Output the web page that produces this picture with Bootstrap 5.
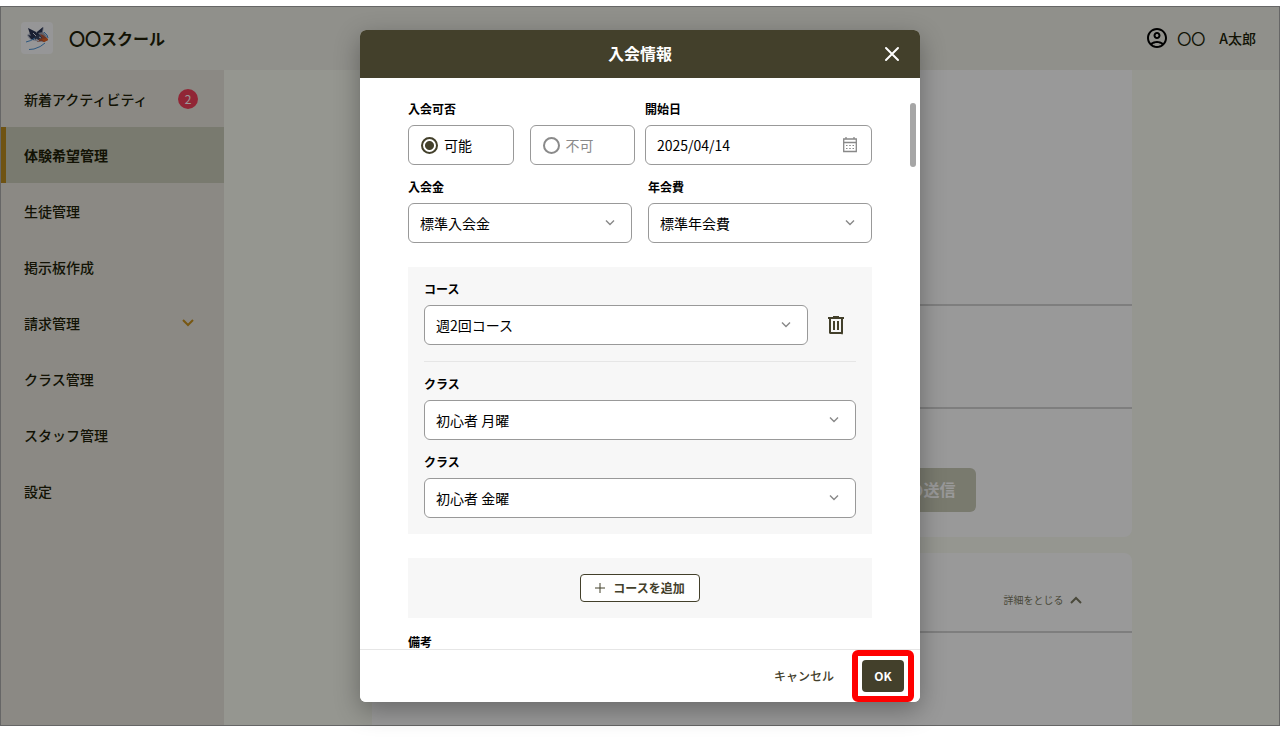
<!DOCTYPE html>
<html lang="ja">
<head>
<meta charset="utf-8">
<meta name="viewport" content="width=device-width, initial-scale=1">
<title>入会情報</title>
<link href="https://cdn.jsdelivr.net/npm/bootstrap@5.3.0/dist/css/bootstrap.min.css" rel="stylesheet">
<style>
  :root { --olive: #43402b; --ink: #201f08; --line: #999; }
  body { font-family: "Noto Sans CJK JP", sans-serif; font-size: 14px; line-height: 20px; color: #000; background: #fff; }
  .app-frame { height: calc(100vh - 32px); margin: 6px 0 26px; border: 1px solid #666; }
  .app-page { background: #f8faf0; color: var(--ink); }
  .app-header { height: 63px; padding: 0 23px 2px 20px; background: #f0f1e8; }
  .brand-name { font-size: 16px; font-weight: 700; color: var(--ink); }
  .side-menu { width: 223px; background: #e8e5dc; padding-top: 1px; }
  .side-menu .nav-link { height: 56px; padding: 0 26px 1px 23px; color: var(--ink); font-weight: 500; }
  .side-menu .nav-link.active { background: #cacbba; border-left: 5px solid #b98a1e; padding-left: 18px; font-weight: 700; }
  .count-badge { width: 20px; height: 20px; background: #f2405a; font-size: 12px; line-height: 20px; font-weight: 400; }
  .content-col { max-width: 760px; }
  .panel-block { background: #fff; }
  .panel-row { border-bottom: 2px solid #d2d2d2; }
  .btn-send { height: 44px; padding: 0 20px 2px; border: 0; border-radius: 6px; background: #cacbb8; color: #fff; font-size: 16px; font-weight: 700; margin: 59px 156px 25px 0; }
  .toggle-link { font-size: 10px; color: #7c7b63; }
  .overlay { inset: 0; background: rgba(0,0,0,.4); padding: 23px 16px; }
  .entry-modal { width: 100%; max-width: 560px; background: #fff; border-radius: 6px; box-shadow: 0 8px 26px rgba(0,0,0,.32); }
  .entry-head { height: 48px; background: #43402b; color: #fff; border-radius: 6px 6px 0 0; }
  .entry-head h1 { font-size: 16px; line-height: 24px; font-weight: 700; padding-bottom: 2px; }
  .close-btn { right: 16px; }
  .entry-body { padding: 23px 48px 0; }
  .field-label { display: block; font-size: 12px; line-height: 16px; font-weight: 700; margin-bottom: 8px; padding: 0; }
  .field-box, .form-select { height: 40px; border: 1px solid var(--line); border-radius: 6px; background-color: #fff; padding: 0 12px 0 11px; font-size: 14px; line-height: 20px; color: #000; }
  .form-select { background-image: url("data:image/svg+xml,%3Csvg xmlns='http://www.w3.org/2000/svg' viewBox='0 0 12 12'%3E%3Cpath d='M2 3.5l4 4 4-4' fill='none' stroke='%23888' stroke-width='1.4'/%3E%3C/svg%3E"); background-size: 12px; background-position: right 15px center; }
  .field-box input[type=text] { min-width: 0; border: 0; padding: 0; outline: 0; background: transparent; }
  .stack { display: flex; flex-direction: column; gap: 14px; }
  .group-box { background: #f7f7f7; padding: 14px 16px 16px; margin-top: 24px; }
  .group-box hr { margin: 2px 0 0; border-color: #e6e6e6; opacity: 1; }
  .choice { gap: 6px; padding: 0 12px; cursor: pointer; }
  .choice .form-check-input { width: 17px; height: 17px; margin: 0; border: 2px solid #8a8a8a; box-shadow: none; flex: none; }
  .choice .form-check-input:checked { border-color: var(--olive); background: radial-gradient(circle, var(--olive) 4px, #fff 5px); }
  .choice.off { color: #8a8a8a; }
  .scroll-thumb { top: 25px; right: 4px; width: 6px; height: 64px; border-radius: 3px; background: #a6a6a6; }
  .icon-btn { border: 0; background: none; padding: 0; line-height: 0; }
  .trash-cell { width: 56px; margin-right: -8px; }
  .btn-add { height: 28px; padding: 0 14px; gap: 8px; border: 1px solid var(--olive); border-radius: 4px; background: #fff; color: var(--olive); font-size: 12px; font-weight: 700; }
  .entry-foot { border-top: 1px solid #e6e6e6; padding: 10px 16px; gap: 16px; background: #fff; border-radius: 0 0 6px 6px; }
  .entry-foot .btn { height: 32px; padding: 0 12px; border: 0; border-radius: 4px; font-size: 12px; line-height: 32px; color: var(--olive); font-weight: 500; }
  .entry-foot .btn-ok { min-width: 42px; background: var(--olive); color: #fff; font-weight: 700; }
  .callout-ring { inset: -10px; border: 6px solid #f00; border-radius: 6px; pointer-events: none; }
</style>
</head>
<body>
<div class="app-frame position-relative">
  <div class="app-page h-100 d-flex flex-column overflow-hidden">
    <header class="app-header d-flex align-items-center justify-content-between flex-shrink-0">
      <div class="d-flex align-items-center gap-3">
        <svg width="32" height="32" viewBox="0 0 32 32" aria-hidden="true">
          <rect width="32" height="32" rx="4" fill="#fafafc"/>
          <path d="M6 13l4-3-3-4 8 4 2-1 6-4-1 5 4 4-1 5-6 1-4-1-5-1-3-3z" fill="#b9bfd0"/>
          <path d="M7 6l8 4 2 3-1 5-4-2-3-4zM16 10l6-5-1 6-2 3-3-1zM7 13l5 1 1 4-3-1z" fill="#2a3554"/>
          <path d="M14 14l5-2 3 3-3 4-5-2z" fill="#394765"/>
          <path d="M17 11l5-1 3 4-4 1z" fill="#a1a3b2"/>
          <path d="M19 12l3 1 4 3 1 2-4 2-3-1-4 1 2-3 3-1z" fill="#b5583a"/>
          <path d="M21 17l5-1 1 2-4 2z" fill="#e8631e"/>
          <path d="M18 15l2 1M15 17l3 2M12 11l3 3" stroke="#dfe3ee" fill="none"/>
          <path d="M5 20q5-1 9-4M8 27.500l5-.5q7-2 11-6M23 10q4 3 4 6" stroke="#4a92d4" stroke-width="1" fill="none"/>
        </svg>
        <span class="brand-name">〇〇スクール</span>
      </div>
      <div class="d-flex align-items-center gap-2 fw-medium">
        <svg width="24" height="24" viewBox="0 0 24 24" fill="#000" aria-hidden="true"><path fill-rule="evenodd" d="M12 2C6.48 2 2 6.48 2 12s4.48 10 10 10 10-4.48 10-10S17.52 2 12 2zM7.35 18.5C8.66 17.56 10.26 17 12 17s3.34.56 4.65 1.5c-1.31.94-2.91 1.5-4.65 1.5s-3.34-.56-4.65-1.5zm10.79-1.38C16.45 15.8 14.32 15 12 15s-4.45.8-6.14 2.12C4.7 15.73 4 13.95 4 12c0-4.42 3.58-8 8-8s8 3.58 8 8c0 1.95-.7 3.73-1.86 5.12zM12 6c-1.93 0-3.5 1.57-3.5 3.5S10.07 13 12 13s3.5-1.57 3.5-3.5S13.93 6 12 6zm0 5c-.83 0-1.5-.67-1.5-1.5S11.17 8 12 8s1.5.67 1.5 1.5S12.83 11 12 11z"/></svg>
        <span>〇〇　A太郎</span>
      </div>
    </header>
    <div class="d-flex flex-grow-1 overflow-hidden">
      <nav class="side-menu nav flex-column flex-nowrap flex-shrink-0">
        <a class="nav-link d-flex align-items-center justify-content-between" href="#">新着アクティビティ<span class="badge rounded-circle p-0 count-badge">2</span></a>
        <a class="nav-link d-flex align-items-center active" aria-current="page" href="#">体験希望管理</a>
        <a class="nav-link d-flex align-items-center" href="#">生徒管理</a>
        <a class="nav-link d-flex align-items-center" href="#">掲示板作成</a>
        <a class="nav-link d-flex align-items-center justify-content-between" href="#">請求管理
          <svg width="20" height="20" viewBox="0 0 20 20" aria-hidden="true"><path d="M5 7l5 5 5-5" fill="none" stroke="#c8921e" stroke-width="2"/></svg></a>
        <a class="nav-link d-flex align-items-center" href="#">クラス管理</a>
        <a class="nav-link d-flex align-items-center" href="#">スタッフ管理</a>
        <a class="nav-link d-flex align-items-center" href="#">設定</a>
      </nav>
      <main class="flex-grow-1 d-flex justify-content-center">
        <div class="content-col w-100 d-flex flex-column gap-3">
          <section class="panel-block rounded-bottom-3 flex-shrink-0">
            <div class="panel-row" style="height:236px"></div>
            <div class="panel-row" style="height:103px"></div>
            <div class="d-flex justify-content-end"><button type="button" class="btn btn-send">の送信</button></div>
          </section>
          <section class="panel-block rounded-top-3 flex-grow-1">
            <div class="panel-row d-flex justify-content-end align-items-center px-5 pt-3" style="height:80px">
              <a class="toggle-link d-flex align-items-center gap-1 text-decoration-none" href="#">詳細をとじる
                <svg width="16" height="16" viewBox="0 0 16 16" aria-hidden="true"><path d="M3 11l5-5 5 5" fill="none" stroke="currentColor" stroke-width="2"/></svg></a>
            </div>
          </section>
        </div>
      </main>
    </div>
  </div>

  <div class="overlay position-absolute d-flex justify-content-center">
    <form class="entry-modal h-100 d-flex flex-column" role="dialog" aria-labelledby="entryTitle">
      <div class="entry-head position-relative d-flex align-items-center justify-content-center flex-shrink-0">
        <h1 id="entryTitle" class="m-0">入会情報</h1>
        <button type="button" class="icon-btn close-btn position-absolute" aria-label="閉じる">
          <svg width="24" height="24" viewBox="0 0 24 24"><path d="M6 6l12 12m0-12l-12 12" stroke="#fff" stroke-width="2" stroke-linecap="round"/></svg>
        </button>
      </div>
      <div class="position-relative flex-grow-1 overflow-hidden">
        <div class="entry-body">
          <div class="stack">
            <div class="d-flex" style="gap:10px">
              <fieldset class="w-50">
                <legend class="field-label">入会可否</legend>
                <div class="d-flex gap-3">
                  <label class="field-box choice d-flex align-items-center flex-fill"><input class="form-check-input" type="radio" name="entry" checked>可能</label>
                  <label class="field-box choice off d-flex align-items-center flex-fill"><input class="form-check-input" type="radio" name="entry">不可</label>
                </div>
              </fieldset>
              <div class="w-50">
                <label class="field-label" for="startDate">開始日</label>
                <div class="field-box d-flex align-items-center">
                  <input class="flex-grow-1" type="text" id="startDate" value="2025/04/14">
                  <button type="button" class="icon-btn" aria-label="カレンダー">
                    <svg width="18" height="18" viewBox="0 0 18 18" fill="none" stroke="#888"><path d="M2.700 3h12.600v12.500H2.700zM2.500 6.500h13" stroke-width="1.300"/><path d="M5 1v2M13 1v2" stroke-width="1.300"/><path d="M5 9.500h1.500m1.700 0h1.600m1.700 0H13M5 12.500h1.500m1.700 0h1.600m1.700 0H13" stroke-width="1.200"/></svg>
                  </button>
                </div>
              </div>
            </div>
            <div class="d-flex gap-3">
              <div class="w-50"><label class="field-label" for="fee">入会金</label><select id="fee" class="form-select"><option>標準入会金</option></select></div>
              <div class="w-50"><label class="field-label" for="annual">年会費</label><select id="annual" class="form-select"><option>標準年会費</option></select></div>
            </div>
          </div>
          <div class="group-box stack">
            <div>
              <label class="field-label" for="course">コース</label>
              <div class="d-flex align-items-center">
                <select id="course" class="form-select flex-grow-1"><option>週2回コース</option></select>
                <div class="trash-cell text-center flex-shrink-0">
                  <button type="button" class="icon-btn" aria-label="削除"><svg width="24" height="24" viewBox="0 0 24 24" fill="#43402b"><path fill-rule="evenodd" d="M7 21q-.825 0-1.412-.587Q5 20.825 5 20V6H4V4h5V3h6v1h5v2h-1v14q0 .825-.587 1.413Q17.825 21 17 21ZM17 6H7v13h10ZM9 17h2V8H9Zm4 0h2V8h-2Z"/></svg></button>
                </div>
              </div>
            </div>
            <hr>
            <div><label class="field-label" for="class1">クラス</label><select id="class1" class="form-select"><option>初心者 月曜</option></select></div>
            <div><label class="field-label" for="class2">クラス</label><select id="class2" class="form-select"><option>初心者 金曜</option></select></div>
          </div>
          <div class="group-box d-flex justify-content-center pt-3 mb-3">
            <button type="button" class="btn btn-add d-flex align-items-center"><svg width="10" height="10" viewBox="0 0 10 10" aria-hidden="true"><path d="M5 0v10M0 5h10" stroke="#43402b"/></svg>コースを追加</button>
          </div>
          <label class="field-label" for="memo">備考</label>
          <textarea id="memo" class="form-control" rows="3"></textarea>
        </div>
        <div class="scroll-thumb position-absolute"></div>
      </div>
      <div class="entry-foot d-flex justify-content-end flex-shrink-0">
        <button type="button" class="btn">キャンセル</button>
        <div class="position-relative">
          <button type="button" class="btn btn-ok">OK</button>
          <span class="callout-ring position-absolute"></span>
        </div>
      </div>
    </form>
  </div>
</div>
<script src="https://cdn.jsdelivr.net/npm/bootstrap@5.3.0/dist/js/bootstrap.bundle.min.js"></script>
</body>
</html>
